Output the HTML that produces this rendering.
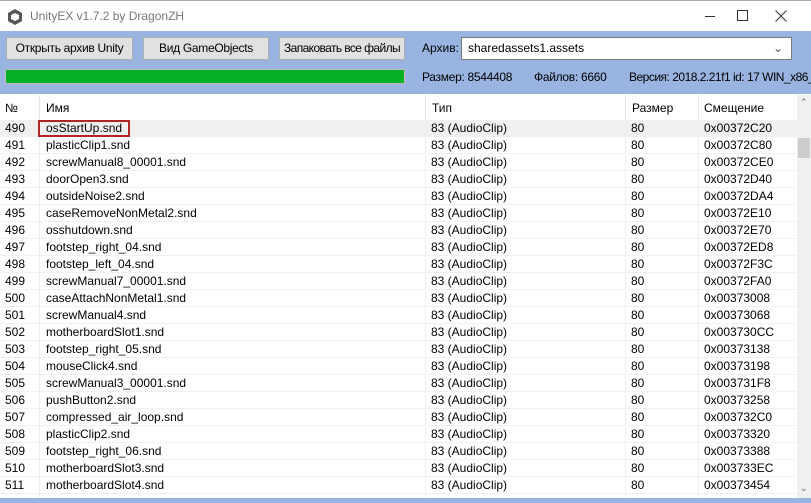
<!DOCTYPE html>
<html><head><meta charset="utf-8"><style>
*{margin:0;padding:0;box-sizing:border-box}
body{width:811px;height:503px;overflow:hidden;background:#fff;font-family:"Liberation Sans",sans-serif;font-size:12px;color:#000;position:relative}
.a{position:absolute;white-space:nowrap}
.title{left:0;top:0;width:811px;height:31px;background:#fff;border-top:1px solid #aaa}
.title .t{left:30px;top:8px;font-size:12px;color:#777}
.blue{left:0;top:31px;width:811px;height:63px;background:#99b4e1}
.btn{height:23px;top:37px;background:#e1e1e1;border:1px solid #adadad;text-align:center;line-height:21px;font-size:12px;letter-spacing:-0.3px;overflow:hidden}
.bar{left:5px;top:69px;width:400px;height:15px;background:#06b025;border:1px solid #bcbcbc}
.combo{left:461px;top:37px;width:331px;height:23px;background:#fff;border:1px solid #7a7a7a;padding-left:6px;line-height:20px}
.hdr{left:0;top:95px;width:797px;height:25px;background:#fff}
.row{position:absolute;left:0;width:797px;height:17px;border-bottom:1px solid #f0f0f0;line-height:16px}
.c{position:absolute;top:0;white-space:nowrap}
.vl{position:absolute;top:95px;width:1px;height:25px;background:#e5e5e5}
.vg{position:absolute;top:120px;width:1px;height:378px;background:#f0f0f0}
.sb{left:797px;top:95px;width:14px;height:403px;background:#f0f0f0}
.bot{left:0;top:498px;width:811px;height:5px;background:#99b4e1}
</style></head><body>
<div class="a title">
<svg class="a" style="left:6px;top:7px" width="18" height="18" viewBox="0 0 18 18"><path d="M9 1 L16 5 L16 13 L9 17 L2 13 L2 5 Z M9 5 L13 7 L13 11 L9 13 L5 11 L5 7 Z" fill="#555" fill-rule="evenodd"/></svg>
<div class="a t">UnityEX v1.7.2 by DragonZH</div>
<div class="a" style="left:705px;top:15px;width:10px;height:1px;background:#333"></div>
<div class="a" style="left:737px;top:9px;width:11px;height:11px;border:1px solid #333"></div>
<svg class="a" style="left:775px;top:9px" width="12" height="12" viewBox="0 0 12 12"><path d="M0.5 0.5 L11.5 11.5 M11.5 0.5 L0.5 11.5" stroke="#333" stroke-width="1"/></svg>
</div>
<div class="a blue"></div>
<div class="a btn" style="left:6px;width:127px">Открыть архив Unity</div>
<div class="a btn" style="left:143px;width:126px">Вид GameObjects</div>
<div class="a btn" style="left:279px;width:126px;letter-spacing:-0.6px">Запаковать все файлы</div>
<div class="a bar"></div>
<div class="a" style="left:422px;top:41px">Архив:</div>
<div class="a combo">sharedassets1.assets<span class="a" style="right:8px;top:0;color:#555">&#8964;</span></div>
<div class="a" style="left:422px;top:70px;letter-spacing:-0.3px">Размер: 8544408</div>
<div class="a" style="left:534px;top:70px;letter-spacing:-0.3px">Файлов: 6660</div>
<div class="a" style="left:629px;top:70px;width:182px;overflow:hidden;letter-spacing:-0.5px">Версия: 2018.2.21f1 id: 17 WIN_x86_</div>
<div class="a hdr">
<div class="c" style="left:5px;top:6px">№</div>
<div class="c" style="left:46px;top:6px">Имя</div>
<div class="c" style="left:432px;top:6px">Тип</div>
<div class="c" style="left:632px;top:6px">Размер</div>
<div class="c" style="left:704px;top:6px">Смещение</div>
</div>
<div class="vl" style="left:39px"></div><div class="vl" style="left:425px"></div><div class="vl" style="left:625px"></div><div class="vl" style="left:698px"></div>
<div id="rows"></div>
<div class="vg" style="left:39px"></div><div class="vg" style="left:425px"></div><div class="vg" style="left:625px"></div><div class="vg" style="left:698px"></div>
<div class="a" style="left:38px;top:120px;width:92px;height:17px;border:2px solid #b22525"></div>
<div class="a sb"><div class="a" style="left:3px;top:2px;font-size:9px;color:#666">&#8963;</div><div class="a" style="left:1px;top:43px;width:12px;height:20px;background:#cdcdcd"></div><div class="a" style="left:3px;top:388px;font-size:9px;color:#666">&#8964;</div></div>
<div class="a bot"></div>
<script>
var d=[["490","osStartUp.snd","0x00372C20"],["491","plasticClip1.snd","0x00372C80"],["492","screwManual8_00001.snd","0x00372CE0"],["493","doorOpen3.snd","0x00372D40"],["494","outsideNoise2.snd","0x00372DA4"],["495","caseRemoveNonMetal2.snd","0x00372E10"],["496","osshutdown.snd","0x00372E70"],["497","footstep_right_04.snd","0x00372ED8"],["498","footstep_left_04.snd","0x00372F3C"],["499","screwManual7_00001.snd","0x00372FA0"],["500","caseAttachNonMetal1.snd","0x00373008"],["501","screwManual4.snd","0x00373068"],["502","motherboardSlot1.snd","0x003730CC"],["503","footstep_right_05.snd","0x00373138"],["504","mouseClick4.snd","0x00373198"],["505","screwManual3_00001.snd","0x003731F8"],["506","pushButton2.snd","0x00373258"],["507","compressed_air_loop.snd","0x003732C0"],["508","plasticClip2.snd","0x00373320"],["509","footstep_right_06.snd","0x00373388"],["510","motherboardSlot3.snd","0x003733EC"],["511","motherboardSlot4.snd","0x00373454"]];
var h="";d.forEach(function(r,i){h+='<div class="row" style="top:'+(120+i*17)+'px;'+(i==0?'background:#f0f0f0':'')+'"><div class="c" style="left:5px">'+r[0]+'</div><div class="c" style="left:46px">'+r[1]+'</div><div class="c" style="left:431px">83 (AudioClip)</div><div class="c" style="left:631px">80</div><div class="c" style="left:704px">'+r[2]+'</div></div>';});
document.getElementById("rows").innerHTML=h;
</script>
</body></html>
